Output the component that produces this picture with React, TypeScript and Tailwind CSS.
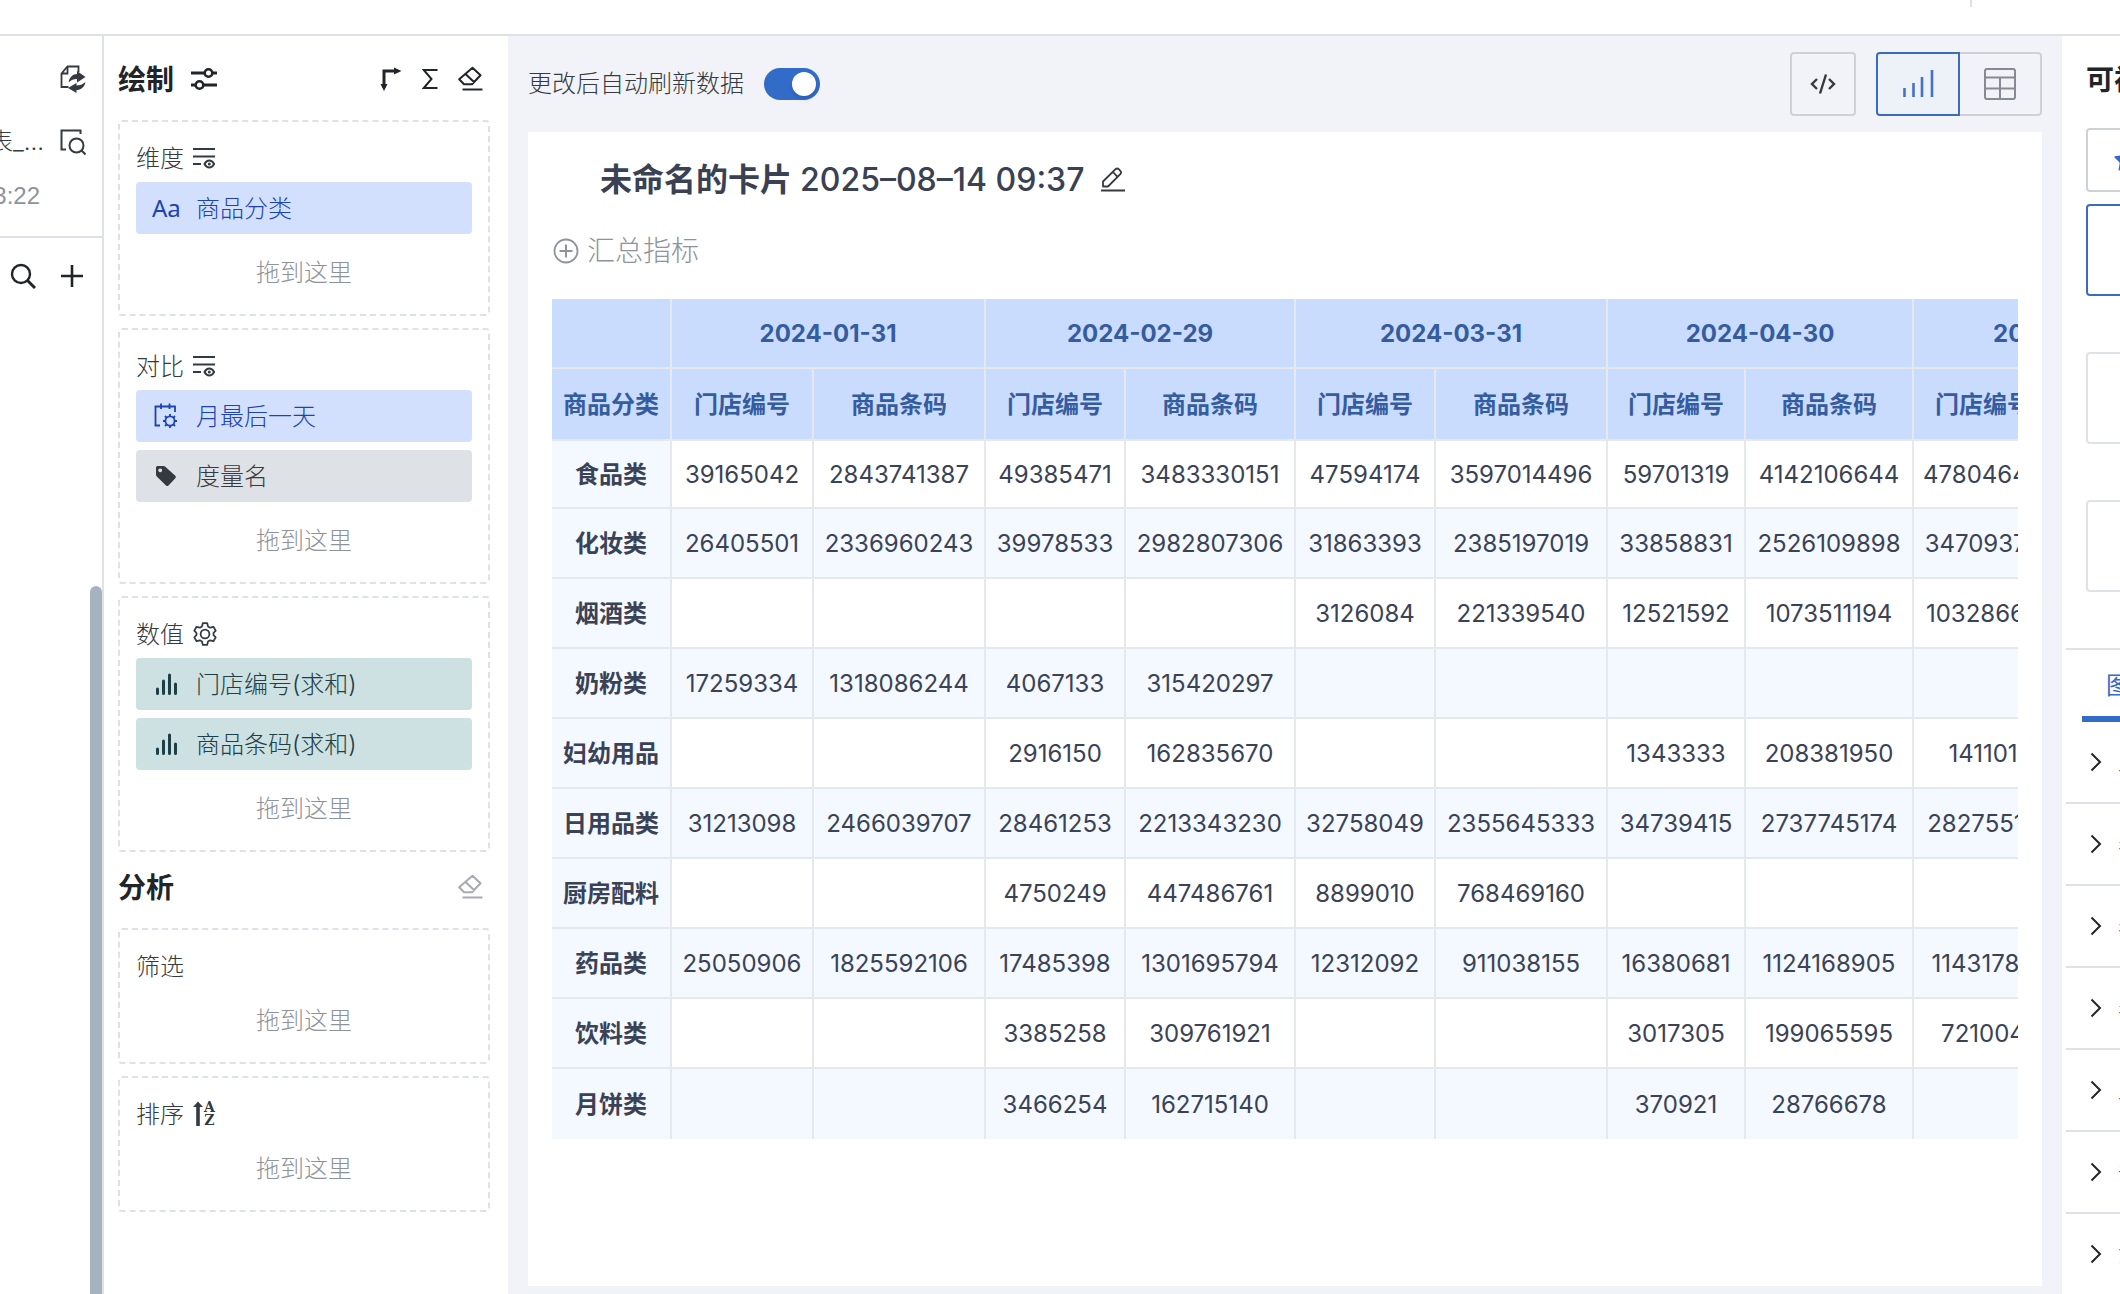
import React from "react";
import { Star } from "lucide-react";

type IconProps = { className?: string };

function Svg({ w, h, className = "", children }: { w: number; h: number; className?: string; children: React.ReactNode }) {
  return (
    <svg width={w} height={h} viewBox={`0 0 ${w} ${h}`} fill="none" stroke="currentColor" strokeWidth="2" className={`shrink-0 ${className}`} aria-hidden="true">
      {children}
    </svg>
  );
}

const SyncDocIcon = () => (
  <Svg w={26} h={28}>
    <path d="M18.5 7V1.5H7.5L1.5 8.5V22h7M7.5 1.5v7h-6" strokeWidth="1.8" />
    <path d="M8.5 17.500C9.500 12 13 9 17 9V6L25.500 12 17 17.500V14C13.500 14 11 15 8.500 17.500Z" fill="currentColor" stroke="none" />
    <path d="M25.500 17C24.500 22.500 20.500 25 16.500 25V28L8 23 16.500 18V20.500C20 20.500 22.500 19.500 25.500 17Z" fill="currentColor" stroke="none" />
  </Svg>
);
const PreviewIcon = () => (
  <Svg w={26} h={26}>
    <path d="M20.500 5V1.500H1.500V20.500H6" />
    <circle cx="16.500" cy="16.500" r="7" />
    <path d="M21.500 21.500 25.500 25.500" />
  </Svg>
);
const SearchIcon = () => (
  <Svg w={26} h={26}>
    <circle cx="11" cy="11" r="9" strokeWidth="2.400" />
    <path d="M17.500 17.500 25 25" strokeWidth="3" />
  </Svg>
);
const PlusIcon = () => (
  <Svg w={24} h={24}>
    <path d="M12 1V23M1 12H23" strokeWidth="2.600" />
  </Svg>
);
const SlidersIcon = () => (
  <Svg w={26} h={24}>
    <path d="M0 6H13M22 6H26M0 18H4M13 18H26" strokeWidth="3" />
    <circle cx="17.500" cy="6" r="3.800" strokeWidth="2.600" />
    <circle cx="8.500" cy="18" r="3.800" strokeWidth="2.600" />
  </Svg>
);
const SwapAxesIcon = () => (
  <Svg w={22} h={24}>
    <path d="M4 19V4H15" strokeWidth="3" />
    <path d="M14 0.500 21.500 4 14 7.500ZM0.500 17 4 24 7.500 17Z" fill="currentColor" stroke="none" />
  </Svg>
);
const SigmaIcon = () => (
  <Svg w={16} h={22}>
    <path d="M15.500 2H1.800L9.500 11 1.800 20H15.500" />
  </Svg>
);
const EraserIcon = ({ className }: IconProps) => (
  <Svg w={26} h={26} className={className}>
    <path d="M14.500 1.800 22.500 9.200 14 18.300H6L1.200 13.200ZM7.500 8 16.500 16.500" strokeLinejoin="round" />
    <path d="M4.500 23.500H24.500" />
  </Svg>
);
const FieldViewIcon = () => (
  <Svg w={22} h={22}>
    <path d="M0 2H22M0 9.500H22M0 17H8" />
    <path d="M11.500 17C13 14.200 14.500 13.500 16.300 13.500S19.600 14.200 21.200 17C19.600 19.800 18.100 20.500 16.300 20.500S13 19.800 11.500 17Z" />
    <circle cx="16.300" cy="17" r="1.500" fill="currentColor" stroke="none" />
  </Svg>
);
const GearIcon = () => (
  <Svg w={24} h={24}>
    <path
      d="M9.800 1.200H14.200L15 4.400 17.200 5.700 20.400 4.800 22.700 8.600 20.500 11V13L22.700 15.400 20.400 19.200 17.200 18.300 15 19.600 14.200 22.800H9.800L9 19.600 6.800 18.300 3.600 19.200 1.300 15.400 3.500 13V11L1.300 8.600 3.600 4.800 6.800 5.700 9 4.400Z"
      strokeLinejoin="round"
      strokeWidth="1.800"
    />
    <circle cx="12" cy="12" r="4.400" strokeWidth="1.800" />
  </Svg>
);
const SortIcon = () => (
  <span className="flex items-center gap-px" aria-hidden="true">
    <Svg w={10} h={26}>
      <path d="M5 25V4" strokeWidth="3.600" />
      <path d="M0 6 5 0.500 10 6Z" fill="currentColor" stroke="none" />
    </Svg>
    <span className="flex flex-col items-center font-['DejaVu_Serif',serif] text-[14px] leading-[13px] font-bold">
      <span>A</span>
      <span>Z</span>
    </span>
  </span>
);
const CalendarGearIcon = () => (
  <Svg w={24} h={26}>
    <path d="M6 22.500H1.500V3.500H21V9M7 0.500V6M15.500 0.500V6" strokeWidth="1.800" />
    <circle cx="16" cy="18" r="4.600" strokeWidth="1.800" />
    <path d="M16 11V13.500M16 22.500V25M9 18H11.500M20.500 18H23M11 13 12.800 14.800M19.200 21.200 21 23M21 13 19.200 14.800M12.800 21.200 11 23" strokeWidth="1.800" />
  </Svg>
);
const TagIcon = () => (
  <Svg w={24} h={24}>
    <path fillRule="evenodd" d="M2 3.500Q2 2 3.500 2H9.500Q10.500 2 11.300 2.700L21.300 11.800Q22.600 13 21.300 14.300L14.500 21.500Q13.300 22.700 12 21.500L2.800 12.500Q2 11.700 2 10.500ZM6.200 4.400A1.900 1.900 0 1 0 6.210 4.400Z" fill="currentColor" stroke="none" />
  </Svg>
);
const BarsIcon = () => (
  <Svg w={24} h={24}>
    <path d="M3.500 17V21.500M9.500 9V21.500M15.500 3V21.500M21.500 12V21.500" strokeWidth="3" strokeLinecap="round" />
  </Svg>
);
const CodeIcon = () => (
  <Svg w={26} h={22}>
    <path d="M7 6 2 11 7 16M19 6 24 11 19 16M16 1.500 10 20.500" strokeWidth="2.400" />
  </Svg>
);
const ChartIcon = () => (
  <Svg w={32} h={28}>
    <path d="M2.500 18V27M11.500 13V27M20 7V27M30 0V27" strokeWidth="2.600" />
  </Svg>
);
const TableIcon = () => (
  <Svg w={34} h={34}>
    <rect x="2" y="2" width="30" height="30" rx="2" />
    <path d="M2 10.500H32M2 21.500H32M17 10.500V32" />
  </Svg>
);
const PencilIcon = () => (
  <Svg w={26} h={26}>
    <path d="M3 19.500V14.500L15.500 2.200Q17.300 0.800 19 2.400L20.300 3.800Q21.800 5.500 20.300 7.200L8 19.500ZM13 5 17.500 9.800" strokeLinejoin="round" strokeWidth="1.800" />
    <path d="M1 23.500H25" />
  </Svg>
);
const CirclePlusIcon = () => (
  <Svg w={26} h={26}>
    <circle cx="13" cy="13" r="11.500" strokeWidth="1.800" />
    <path d="M13 6.500V19.500M6.500 13H19.500" />
  </Svg>
);
const ChevronIcon = () => (
  <Svg w={12} h={20}>
    <path d="M1.500 1.500 10 10 1.500 18.500" />
  </Svg>
);

const tones = {
  blue: "bg-[#d3e0fd] text-[#1d43b3]",
  gray: "bg-[#dee2e6] text-[#343a40]",
  green: "bg-[#cde1e3] text-[#1c4045]",
};
type Chip = { label: string; tone: keyof typeof tones; icon: React.ReactNode };

function DropZone({ title, action, chips = [] }: { title: string; action?: { label: string; icon: React.ReactNode }; chips?: Chip[] }) {
  return (
    <section className="rounded border-2 border-dashed border-[#dee2e6] px-4 py-3 font-light">
      <div className="flex h-12 items-center gap-[9px] text-[#343a40]">
        <h3 className="pt-0.5">{title}</h3>
        {action && (
          <button type="button" aria-label={action.label}>
            {action.icon}
          </button>
        )}
      </div>
      {chips.map((c) => (
        <button key={c.label} type="button" className={`mb-2 flex h-[52px] w-full items-center rounded px-4 ${tones[c.tone]}`}>
          <span className="flex w-11 justify-start pl-0.5">{c.icon}</span>
          <span className="pt-0.5">{c.label}</span>
        </button>
      ))}
      <p className="flex h-[60px] items-center justify-center pt-0.5 text-[#8e939b]">拖到这里</p>
    </section>
  );
}

const months = ["2024-01-31", "2024-02-29", "2024-03-31", "2024-04-30", "2024-05-31"];
const rows: [string, string[]][] = [
  ["食品类", ["39165042", "2843741387", "49385471", "3483330151", "47594174", "3597014496", "59701319", "4142106644", "47804640", ""]],
  ["化妆类", ["26405501", "2336960243", "39978533", "2982807306", "31863393", "2385197019", "33858831", "2526109898", "34709370", ""]],
  ["烟酒类", ["", "", "", "", "3126084", "221339540", "12521592", "1073511194", "10328660", ""]],
  ["奶粉类", ["17259334", "1318086244", "4067133", "315420297", "", "", "", "", "", ""]],
  ["妇幼用品", ["", "", "2916150", "162835670", "", "", "1343333", "208381950", "141101", ""]],
  ["日用品类", ["31213098", "2466039707", "28461253", "2213343230", "32758049", "2355645333", "34739415", "2737745174", "28275510", ""]],
  ["厨房配料", ["", "", "4750249", "447486761", "8899010", "768469160", "", "", "", ""]],
  ["药品类", ["25050906", "1825592106", "17485398", "1301695794", "12312092", "911038155", "16380681", "1124168905", "11431780", ""]],
  ["饮料类", ["", "", "3385258", "309761921", "", "", "3017305", "199065595", "721004", ""]],
  ["月饼类", ["", "", "3466254", "162715140", "", "", "370921", "28766678", "", ""]],
];

const line = "border-r-2 border-b-2 border-[#e5e8ec] pt-0.5";

function PivotTable() {
  return (
    <div className="overflow-hidden">
      <table className="w-[1664px] table-fixed border-separate border-spacing-0 text-center text-[#3a4256]">
        <colgroup>
          <col className="w-[120px]" />
          <col className="w-[142px]" />
          <col className="w-[172px]" />
          <col className="w-[140px]" />
          <col className="w-[170px]" />
          <col className="w-[140px]" />
          <col className="w-[172px]" />
          <col className="w-[138px]" />
          <col className="w-[168px]" />
          <col className="w-[140px]" />
          <col className="w-[162px]" />
        </colgroup>
        <thead className="bg-[#c9dcfd] text-[#355c9f]">
          <tr className="h-[70px]">
            <td className={line} />
            {months.map((m) => (
              <th key={m} colSpan={2} scope="colgroup" className={`font-bold ${line}`}>
                {m}
              </th>
            ))}
          </tr>
          <tr className="h-[72px]">
            <th scope="col" className={`font-bold ${line}`}>商品分类</th>
            {months.map((m) => (
              <React.Fragment key={m}>
                <th scope="col" className={`font-bold ${line}`}>门店编号</th>
                <th scope="col" className={`font-bold ${line}`}>商品条码</th>
              </React.Fragment>
            ))}
          </tr>
        </thead>
        <tbody>
          {rows.map(([name, cells]) => (
            <tr key={name} className="h-[70px] first:h-[68px] even:bg-[#f4f8ff] last:[&>*]:border-b-0">
              <th scope="row" className={`bg-[#f4f8ff] font-bold ${line}`}>{name}</th>
              {cells.map((v, i) => (
                <td key={i} className={line}>{v}</td>
              ))}
            </tr>
          ))}
        </tbody>
      </table>
    </div>
  );
}

const settings = ["主题", "表头", "表格", "表体", "上卷", "条件", "注释"];

export default function App() {
  return (
    <div className="flex h-screen flex-col overflow-hidden bg-white font-['Inter','Noto_Sans_CJK_SC',sans-serif] text-2xl leading-9 text-[#212529]">
      <header className="flex h-9 shrink-0 justify-end border-b-2 border-[#dee2e6] pr-[148px]">
        <div className="h-[7px] w-0.5 bg-[#dee2e6]" />
      </header>

      <div className="flex min-h-0 flex-1">
        <aside className="flex w-[104px] shrink-0 flex-col border-r-2 border-[#dee2e6]">
          <div className="flex h-[202px] flex-col border-b-2 border-[#dee2e6] pt-6 text-[#343a40]">
            <div className="flex h-[38px] items-center justify-end pr-4">
              <button type="button" aria-label="更换数据集"><SyncDocIcon /></button>
            </div>
            <div className="mt-6 flex h-[40px] items-center justify-end gap-4 overflow-hidden pr-4">
              <span className="whitespace-nowrap font-light">报表_...</span>
              <button type="button" aria-label="预览"><PreviewIcon /></button>
            </div>
            <div className="mt-4 flex justify-end overflow-hidden pr-[62px] font-['Liberation_Sans',sans-serif] text-[#8e939b]">13:22</div>
          </div>
          <div className="flex h-[76px] items-center justify-end gap-6 pr-[18px]">
            <button type="button" aria-label="搜索"><SearchIcon /></button>
            <button type="button" aria-label="新增"><PlusIcon /></button>
          </div>
          <div className="mt-[272px] w-3 flex-1 self-end rounded-t-full bg-[#a5b3c1]" />
        </aside>

        <aside className="w-[404px] shrink-0 px-[14px] pr-[18px]">
          <div className="flex h-[84px] items-center pt-0.5">
            <h2 className="pt-0.5 text-[28px] font-bold">绘制</h2>
            <button type="button" aria-label="设置" className="ml-[17px]"><SlidersIcon /></button>
            <div className="ml-auto flex items-center gap-5 pr-[6px]">
              <button type="button" aria-label="行列互换"><SwapAxesIcon /></button>
              <button type="button" aria-label="合计"><SigmaIcon /></button>
              <button type="button" aria-label="清空绘制"><EraserIcon /></button>
            </div>
          </div>
          <div className="flex flex-col gap-3">
            <DropZone
              title="维度"
              action={{ label: "维度显示", icon: <FieldViewIcon /> }}
              chips={[{ label: "商品分类", tone: "blue", icon: <span className="-ml-0.5 font-['Noto_Sans',sans-serif] font-normal">Aa</span> }]}
            />
            <DropZone
              title="对比"
              action={{ label: "对比显示", icon: <FieldViewIcon /> }}
              chips={[
                { label: "月最后一天", tone: "blue", icon: <CalendarGearIcon /> },
                { label: "度量名", tone: "gray", icon: <TagIcon /> },
              ]}
            />
            <DropZone
              title="数值"
              action={{ label: "数值设置", icon: <GearIcon /> }}
              chips={[
                { label: "门店编号(求和)", tone: "green", icon: <BarsIcon /> },
                { label: "商品条码(求和)", tone: "green", icon: <BarsIcon /> },
              ]}
            />
          </div>
          <div className="mb-1.5 flex h-[70px] items-center justify-between pr-[6px]">
            <h2 className="pt-0.5 text-[28px] font-bold">分析</h2>
            <button type="button" aria-label="清空分析"><EraserIcon className="text-[#a6abb1]" /></button>
          </div>
          <div className="flex flex-col gap-3">
            <DropZone title="筛选" />
            <DropZone title="排序" action={{ label: "排序方式", icon: <SortIcon /> }} />
          </div>
        </aside>

        <main className="flex min-w-0 flex-1 flex-col bg-[#f2f3f8] px-5 pb-2">
          <div className="flex h-24 shrink-0 items-center">
            <label className="flex items-center gap-5 font-light text-[#343a40]">
              更改后自动刷新数据
              <span className="relative flex h-8 w-14">
                <input type="checkbox" role="switch" defaultChecked className="peer h-8 w-14 appearance-none rounded-full bg-gray-300 checked:bg-[#336bc9]" />
                <span className="pointer-events-none absolute top-1 left-1 size-6 rounded-full bg-white shadow-md peer-checked:left-7" />
              </span>
            </label>
            <div className="ml-auto flex h-16">
              <button type="button" aria-label="代码" className="mr-5 flex w-[66px] items-center justify-center rounded border-2 border-[#ced2d8] text-[#343a40]"><CodeIcon /></button>
              <button type="button" aria-label="图表" className="flex w-[84px] items-center justify-center rounded-l border-2 border-[#3a6cbe] bg-[#edf2f9] text-[#4672c4]"><ChartIcon /></button>
              <button type="button" aria-label="表格" className="flex w-[82px] items-center justify-center rounded-r border-2 border-l-0 border-[#ced2d8] text-[#868b93]"><TableIcon /></button>
            </div>
          </div>
          <div className="flex-1 overflow-hidden bg-white px-6">
            <div className="flex h-24 items-center gap-4 pl-12">
              <h1 className="text-[32px] font-semibold text-[#394152]">
                未命名的卡片 <span className="font-medium">2025–08–14 09:37</span>
              </h1>
              <button type="button" aria-label="编辑标题" className="text-[#343a40]"><PencilIcon /></button>
            </div>
            <button type="button" className="mb-[25px] flex h-[46px] items-center gap-2 pl-px text-[28px] font-light text-[#8e939b]">
              <CirclePlusIcon />
              汇总指标
            </button>
            <PivotTable />
          </div>
        </main>

        <aside className="flex w-[58px] shrink-0 flex-col overflow-hidden pl-1 whitespace-nowrap">
          <div className="flex h-[92px] shrink-0 items-center pb-1 pl-5">
            <h2 className="text-[28px] font-bold">可视化</h2>
          </div>
          <div className="w-80 shrink-0 pl-5">
            <button type="button" aria-label="推荐图表" className="flex h-16 w-full items-center rounded border-2 border-[#ced2d8] pl-6 text-[#336bc9]">
              <Star size={28} fill="currentColor" strokeWidth={0} />
            </button>
            <button type="button" aria-label="图表类型一" className="mt-3 block h-[92px] w-full rounded border-2 border-[#3a6cbe]" />
            <button type="button" aria-label="图表类型二" className="mt-14 block h-[92px] w-full rounded border-2 border-[#dee2e6]" />
            <button type="button" aria-label="图表类型三" className="mt-14 block h-[92px] w-full rounded border-2 border-[#dee2e6]" />
          </div>
          <div className="mt-14 flex h-[74px] w-80 shrink-0 border-t-2 border-[#dee2e6] pl-4">
            <button type="button" className="border-b-[6px] border-[#336bc9] px-6 pt-1.5 text-[#336bc9]">图表</button>
          </div>
          {settings.map((s) => (
            <button key={s} type="button" className="flex h-[82px] w-80 shrink-0 items-center gap-4 border-b-2 border-[#dee2e6] pl-6 font-light">
              <ChevronIcon />
              {s}
            </button>
          ))}
        </aside>
      </div>
    </div>
  );
}
